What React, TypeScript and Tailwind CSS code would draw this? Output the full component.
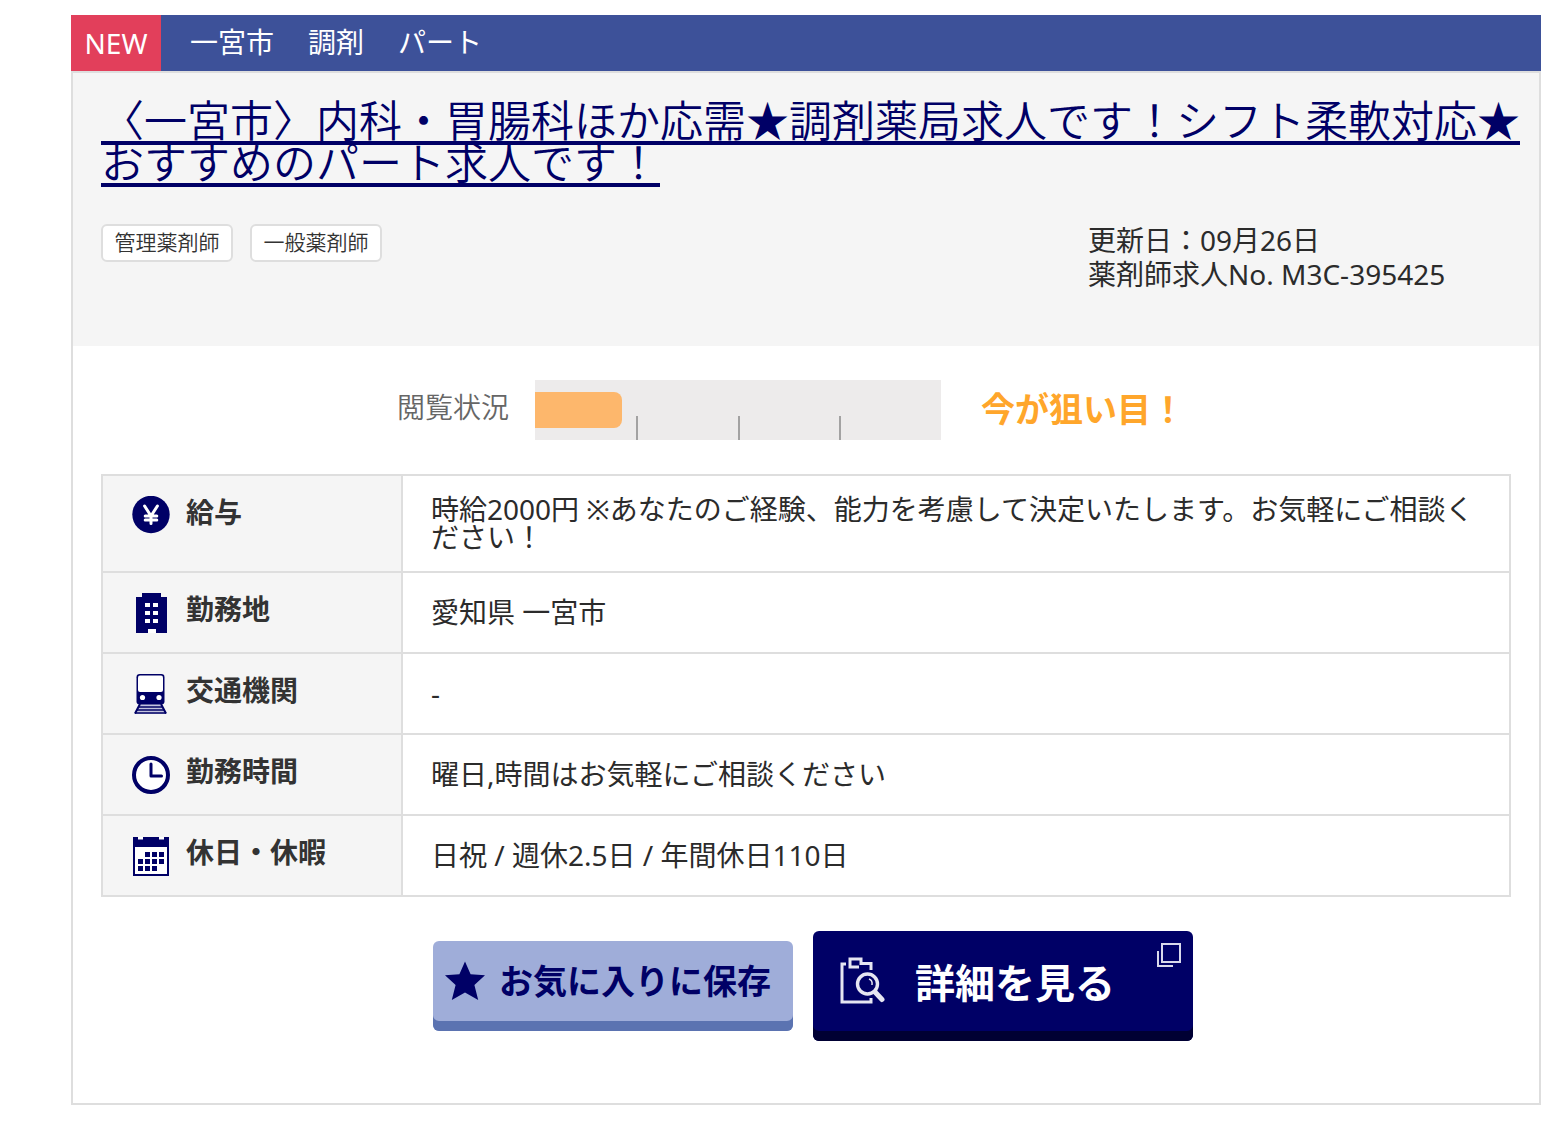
import React from "react";

const NAVY = "#000066";

function YenIcon() {
  return (
    <svg width="40" height="40" viewBox="0 0 40 40" aria-hidden="true">
      <circle cx="20" cy="18.5" r="18.7" fill={NAVY} />
      <path
        d="M13.6 10 20 20 26.4 10M20 20V27.6M14.2 20H25.8M14.2 24H25.8"
        fill="none"
        stroke="#fff"
        strokeWidth="3"
        strokeLinecap="round"
      />
    </svg>
  );
}

function BuildingIcon() {
  return (
    <svg width="40" height="40" viewBox="0 0 40 40" aria-hidden="true">
      <path d="M11 0H30V4H36V40H25V36H17V40H5V4H11Z" fill={NAVY} />
      <path
        d="M14 10h5v4h-5zM22 10h5v4h-5zM14 18h5v4h-5zM22 18h5v4h-5zM14 26h5v4h-5zM22 26h5v4h-5zM17 36h8v4h-8z"
        fill="#fff"
      />
    </svg>
  );
}

function TrainIcon() {
  return (
    <svg width="40" height="40" viewBox="0 0 40 40" aria-hidden="true">
      <path d="M9 30H30L36 40H3Z" fill="#c4c4de" />
      <path d="M9 30 4 39.5M30 30 35 39.5" stroke={NAVY} strokeWidth="2" />
      <path d="M8 33H31M6 36H33M4 39H35" stroke={NAVY} strokeWidth="1.4" />
      <rect x="5.5" y="0" width="28" height="30.4" rx="3.2" fill={NAVY} />
      <rect x="7" y="1.4" width="25" height="16.6" rx="2" fill="#fff" />
      <circle cx="11.5" cy="23.500" r="2.6" fill="#fff" />
      <circle cx="28" cy="23.500" r="2.6" fill="#fff" />
    </svg>
  );
}

function ClockIcon() {
  return (
    <svg width="40" height="40" viewBox="0 0 40 40" aria-hidden="true">
      <circle cx="20" cy="20" r="17" fill="#fff" stroke={NAVY} strokeWidth="4" />
      <path
        d="M20 9V21H30.5"
        fill="none"
        stroke={NAVY}
        strokeWidth="3"
        strokeLinecap="round"
        strokeLinejoin="round"
      />
    </svg>
  );
}

function CalendarIcon() {
  return (
    <svg width="40" height="40" viewBox="0 0 40 40" aria-hidden="true">
      <path d="M2 1H38V40H2Z" fill={NAVY} />
      <path d="M4 11H36V38H4ZM7 1h5v2.500H7zM28 1h5v2.500h-5z" fill="#fff" />
      <path
        d="M14 16h5v5h-5zM21 16h5v5h-5zM28 16h5v5h-5zM7 23h5v5H7zM14 23h5v5h-5zM21 23h5v5h-5zM28 23h5v5h-5zM7 30h5v5H7zM14 30h5v5h-5zM21 30h5v5h-5z"
        fill={NAVY}
      />
    </svg>
  );
}

function StarIcon() {
  return (
    <svg width="42" height="40" viewBox="0 0 42 40" aria-hidden="true">
      <path
        d="M21 0.500 26.600 13.200 41 14.200 30.400 24 34.200 39 21 31.400 7.800 39 11.600 24 1 14.200 15.400 13.200Z"
        fill={NAVY}
      />
    </svg>
  );
}

function SearchDocIcon() {
  return (
    <svg width="46" height="50" viewBox="0 0 46 50" fill="none" stroke="#e6e6f2" aria-hidden="true">
      <path d="M7 8H3V46H32V42" strokeWidth="3" />
      <path d="M20 11H11V3H22V7.500H32V14" strokeWidth="3" />
      <circle cx="28.500" cy="28" r="10" strokeWidth="3.400" />
      <path d="M36 36 43 43.500" strokeWidth="5" strokeLinecap="round" />
      <path d="M30 23C33 24 33.500 26 33 29" strokeWidth="1.500" />
    </svg>
  );
}

function NewWindowIcon() {
  return (
    <svg width="26" height="26" viewBox="0 0 26 26" fill="none" stroke="#d9d9ec" strokeWidth="2" aria-hidden="true">
      <path d="M6 2H24V20H6Z" />
      <path d="M2 9V24H17" />
    </svg>
  );
}

const rows = [
  {
    label: "給与",
    icon: <YenIcon />,
    value: "時給2000円 ※あなたのご経験、能力を考慮して決定いたします。お気軽にご相談ください！",
  },
  { label: "勤務地", icon: <BuildingIcon />, value: "愛知県 一宮市" },
  { label: "交通機関", icon: <TrainIcon />, value: "-" },
  { label: "勤務時間", icon: <ClockIcon />, value: "曜日,時間はお気軽にご相談ください" },
  { label: "休日・休暇", icon: <CalendarIcon />, value: "日祝 / 週休2.5日 / 年間休日110日" },
];

export default function App() {
  return (
    <article
      lang="ja"
      className="mt-[15px] mr-[7px] mb-9 ml-[71px] font-['Noto_Sans','Noto_Sans_CJK_JP',sans-serif] text-[28px] leading-7 text-[#2b2b2b]"
    >
      <div className="flex h-14 items-center bg-[#3d5199] text-white">
        <span className="flex h-full w-[90px] items-center justify-center bg-[#e23f5b]">NEW</span>
        <ul className="flex gap-[34px] pb-0.5 pl-[29px]">
          <li>一宮市</li>
          <li>調剤</li>
          <li>パート</li>
        </ul>
      </div>

      <div className="border-2 border-[#dedede] bg-white pb-[62px]">
        <header className="bg-[#f5f5f5] pt-6 pb-[55px] pl-7">
          <h2 className="pr-4 font-['Noto_Sans_CJK_JP',sans-serif] text-[43px] leading-[42px] font-[350]">
            <a
              href="#detail"
              className="text-[#000066] underline decoration-4 underline-offset-[4px] [text-decoration-skip-ink:none]"
            >
              〈一宮市〉内科・胃腸科ほか応需★調剤薬局求人です！シフト柔軟対応★おすすめのパート求人です！
            </a>
          </h2>
          <div className="mt-[42px] flex items-start justify-between pr-7">
            <ul className="flex gap-[17px] pt-px text-[21px] leading-8 font-[350] text-[#333]">
              <li className="w-[132px] rounded-md border-2 border-[#dedede] bg-white pb-0.5 text-center">管理薬剤師</li>
              <li className="w-[132px] rounded-md border-2 border-[#dedede] bg-white pb-0.5 text-center">一般薬剤師</li>
            </ul>
            <p className="w-[30%] leading-[34px] whitespace-pre-line">
              {"更新日：09月26日\n薬剤師求人No. M3C-395425"}
            </p>
          </div>
        </header>

        <section className="flex items-center justify-center pt-[34px] pr-[30px]">
          <span className="pb-1.5 font-[350] text-[#666]">閲覧状況</span>
          <div className="ml-[26px] flex h-[60px] w-[406px] items-end bg-[#edebeb]">
            <div className="mb-3 h-9 w-[87px] rounded-r-lg bg-[#fdb76c]" />
            <div className="ml-[14px] h-6 w-0.5 bg-[#a3a2a2]" />
            <div className="ml-[100px] h-6 w-0.5 bg-[#a3a2a2]" />
            <div className="ml-[99px] h-6 w-0.5 bg-[#a3a2a2]" />
          </div>
          <strong className="ml-10 pb-0.5 text-[34px] font-bold text-[#ffa62b]">今が狙い目！</strong>
        </section>

        <div className="px-7 pt-[34px]">
          <table className="w-full border-collapse">
            <tbody>
              {rows.map((row) => (
                <tr key={row.label}>
                  <th
                    scope="row"
                    className="w-[300px] border-2 border-[#dedede] bg-[#f5f5f5] pt-5 pb-[19px] pl-7 text-left align-top font-bold text-[#333]"
                  >
                    <div className="flex h-10 items-start gap-[15px]">
                      {row.icon}
                      <span className="pt-0.5">{row.label}</span>
                    </div>
                  </th>
                  <td className="border-2 border-[#dedede] px-7 pt-[19px] pb-5">{row.value}</td>
                </tr>
              ))}
            </tbody>
          </table>
        </div>

        <div className="flex items-center justify-center gap-5 pt-[34px] pl-[14px]">
          <button
            type="button"
            className="flex h-[90px] w-[360px] items-center gap-[13px] rounded-md bg-[#9fadd9] pb-[10px] pl-[11px] text-[34px] font-bold text-[#000066] shadow-[inset_0_-10px_0_#5b73b1]"
          >
            <StarIcon />
            お気に入りに保存
          </button>
          <a
            href="#detail"
            className="relative flex h-[110px] w-[380px] items-center rounded-md bg-[#000066] pb-[10px] pl-[26px] text-[40px] font-bold text-white shadow-[inset_0_-10px_0_#000033]"
          >
            <SearchDocIcon />
            <span className="ml-[30px] pt-1">詳細を見る</span>
            <span className="absolute top-[11px] right-[11px]">
              <NewWindowIcon />
            </span>
          </a>
        </div>
      </div>
    </article>
  );
}
